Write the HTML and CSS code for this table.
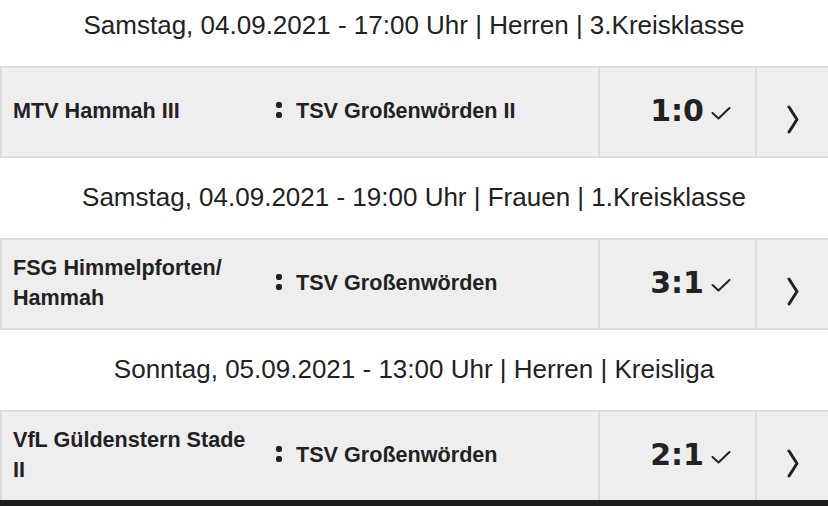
FILE: index.html
```html
<!DOCTYPE html>
<html lang="de">
<head>
<meta charset="utf-8">
<title>Spiele</title>
<link rel="stylesheet" href="styles.css">
</head>
<body>
<div class="list">
  <div class="day">Samstag, 04.09.2021 - 17:00 Uhr | Herren | 3.Kreisklasse</div>
  <div class="match">
    <div class="team home">MTV Hammah III</div>
    <div class="sep"><svg width="6" height="16" viewBox="0 0 6 16"><rect x="0" y="0" width="6" height="6" rx="2.2" fill="#222"/><rect x="0" y="10" width="6" height="6" rx="2.2" fill="#222"/></svg></div>
    <div class="team away">TSV Großenwörden II</div>
    <div class="score"><span class="result">1:0</span><svg class="check" width="20" height="13" viewBox="0 0 20 13"><polyline points="1.5,6 7.5,11.5 18.5,1" fill="none" stroke="#222" stroke-width="2" stroke-linecap="round" stroke-linejoin="round"/></svg></div>
    <div class="more"><svg width="12" height="29" viewBox="0 0 12 29"><polyline points="2,2 10,14.5 2,27" fill="none" stroke="#222" stroke-width="3" stroke-linecap="round" stroke-linejoin="round"/></svg></div>
  </div>
  <div class="day">Samstag, 04.09.2021 - 19:00 Uhr | Frauen | 1.Kreisklasse</div>
  <div class="match">
    <div class="team home">FSG Himmelpforten/ Hammah</div>
    <div class="sep"><svg width="6" height="16" viewBox="0 0 6 16"><rect x="0" y="0" width="6" height="6" rx="2.2" fill="#222"/><rect x="0" y="10" width="6" height="6" rx="2.2" fill="#222"/></svg></div>
    <div class="team away">TSV Großenwörden</div>
    <div class="score"><span class="result">3:1</span><svg class="check" width="20" height="13" viewBox="0 0 20 13"><polyline points="1.5,6 7.5,11.5 18.5,1" fill="none" stroke="#222" stroke-width="2" stroke-linecap="round" stroke-linejoin="round"/></svg></div>
    <div class="more"><svg width="12" height="29" viewBox="0 0 12 29"><polyline points="2,2 10,14.5 2,27" fill="none" stroke="#222" stroke-width="3" stroke-linecap="round" stroke-linejoin="round"/></svg></div>
  </div>
  <div class="day">Sonntag, 05.09.2021 - 13:00 Uhr | Herren | Kreisliga</div>
  <div class="match">
    <div class="team home">VfL Güldenstern Stade II</div>
    <div class="sep"><svg width="6" height="16" viewBox="0 0 6 16"><rect x="0" y="0" width="6" height="6" rx="2.2" fill="#222"/><rect x="0" y="10" width="6" height="6" rx="2.2" fill="#222"/></svg></div>
    <div class="team away">TSV Großenwörden</div>
    <div class="score"><span class="result">2:1</span><svg class="check" width="20" height="13" viewBox="0 0 20 13"><polyline points="1.5,6 7.5,11.5 18.5,1" fill="none" stroke="#222" stroke-width="2" stroke-linecap="round" stroke-linejoin="round"/></svg></div>
    <div class="more"><svg width="12" height="29" viewBox="0 0 12 29"><polyline points="2,2 10,14.5 2,27" fill="none" stroke="#222" stroke-width="3" stroke-linecap="round" stroke-linejoin="round"/></svg></div>
  </div>
</div>
<div class="bottombar"></div>
</body>
</html>
```

FILE: styles.css
```css
html, body {
  margin: 0;
  padding: 0;
  background: #ffffff;
  overflow: hidden;
}
body {
  font-family: "Liberation Sans", Arial, sans-serif;
  color: #222222;
}
.list {
  margin-top: -14px;
  display: flex;
  flex-direction: column;
}
.day {
  height: 80px;
  box-sizing: border-box;
  padding-bottom: 2px;
  display: flex;
  align-items: center;
  justify-content: center;
  font-size: 26px;
  line-height: 30px;
  color: #222222;
  white-space: nowrap;
}
.match {
  height: 92px;
  box-sizing: border-box;
  background: #eeeeee;
  border-top: 2px solid #dcdcdc;
  border-bottom: 2px solid #dcdcdc;
  border-left: 2px solid #dcdcdc;
  display: grid;
  grid-template-columns: 272px 20px 304px 157px 73px;
}
.team {
  font-weight: bold;
  font-size: 21.6px;
  line-height: 30px;
  display: flex;
  align-items: center;
  padding-bottom: 3px;
  box-sizing: border-box;
}
.home {
  padding-left: 11px;
  padding-right: 22px;
}
.away {
  padding-left: 2px;
}
.sep {
  display: flex;
  align-items: center;
  padding-left: 2px;
  padding-bottom: 4px;
  box-sizing: border-box;
}
.score {
  border-left: 2px solid #dcdcdc;
  display: flex;
  align-items: center;
  justify-content: center;
  padding-left: 26px;
  padding-bottom: 3px;
  box-sizing: border-box;
}
.result {
  font-family: "DejaVu Sans", sans-serif;
  font-weight: bold;
  font-size: 30px;
  line-height: 34px;
  letter-spacing: 0;
}
.check {
  margin-left: 7px;
  margin-top: 6px;
}
.more {
  border-left: 2px solid #dcdcdc;
  display: flex;
  align-items: center;
  justify-content: center;
  padding-top: 14px;
  box-sizing: border-box;
}
.bottombar {
  position: fixed;
  left: 0;
  right: 0;
  bottom: 0;
  height: 6px;
  background: #1c1c1c;
}
```
